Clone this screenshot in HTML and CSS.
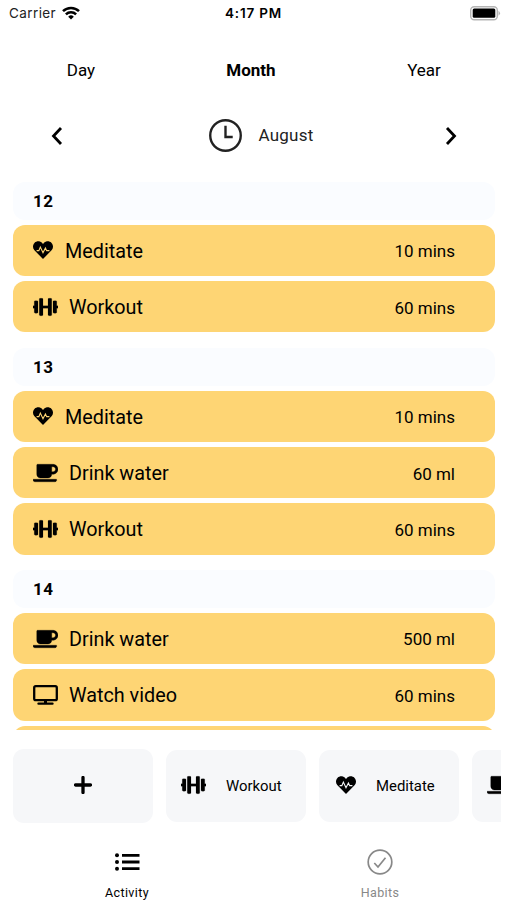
FILE: index.html
```html
<!DOCTYPE html>
<html lang="en">
<head>
<meta charset="utf-8">
<title>Activity</title>
<link rel="stylesheet" href="styles.css">
</head>
<body>
<svg class="defs" aria-hidden="true">
  <symbol id="heart" viewBox="0 0 512 512"><path d="M473.7 73.9l-2.4-2.5c-51.5-52.6-135.8-52.6-187.4 0L256 100l-27.9-28.5c-51.5-52.7-135.9-52.7-187.4 0l-2.4 2.4C-10.4 123.7-12.500 203 31 256l212 218.500c7.100 7.300 18.600 7.300 25.700 0L481 256c43.500-53 41.400-132.300-7.300-182.100z"/><path class="pulse" d="M92 272h58l38-90 68 142 62-118 32 66h70"/></symbol>
  <symbol id="dumbbell" viewBox="0 0 640 512"><path stroke="currentColor" stroke-width="4" d="M104 96H56c-13.300 0-24 10.700-24 24v104H8c-4.400 0-8 3.600-8 8v48c0 4.400 3.600 8 8 8h24v104c0 13.300 10.700 24 24 24h48c13.300 0 24-10.700 24-24V120c0-13.300-10.700-24-24-24zm528 128h-24V120c0-13.300-10.700-24-24-24h-48c-13.300 0-24 10.700-24 24v272c0 13.300 10.700 24 24 24h48c13.300 0 24-10.700 24-24V288h24c4.400 0 8-3.600 8-8v-48c0-4.400-3.600-8-8-8zM456 32h-48c-13.300 0-24 10.700-24 24v168H256V56c0-13.300-10.700-24-24-24h-48c-13.300 0-24 10.700-24 24v400c0 13.300 10.700 24 24 24h48c13.300 0 24-10.700 24-24V288h128v168c0 13.300 10.700 24 24 24h48c13.300 0 24-10.700 24-24V56c0-13.300-10.700-24-24-24z"/></symbol>
  <symbol id="cup" viewBox="0 0 640 512"><path stroke="currentColor" stroke-width="8" d="M192 384h192c53 0 96-43 96-96h32c70.600 0 128-57.400 128-128S582.600 32 512 32H120c-13.300 0-24 10.700-24 24v232c0 53 43 96 96 96zM512 96c35.300 0 64 28.700 64 64s-28.700 64-64 64h-32V96h32zm47.700 384H48.300c-47.600 0-61-64-36-64h583.300c25 0 11.800 64-35.900 64z"/></symbol>
  <symbol id="screen" viewBox="0 0 25 20"><path fill="none" stroke="currentColor" stroke-width="2.300" d="M2.700 1.200h19.600q1.500 0 1.500 1.500v11q0 1.500-1.500 1.500H2.700q-1.500 0-1.500-1.500v-11q0-1.500 1.500-1.500z"/><path d="M11 15h3v2.600h5.500q1.200 0 1.200 1.100t-1.200 1.100h-14q-1.200 0-1.200-1.100t1.200-1.100H11z"/></symbol>
</svg>
<main class="app">
  <header class="status">
    <span class="carrier">Carrier</span>
    <svg class="wifi" viewBox="0 0 18 14"><g fill="none" stroke="currentColor" stroke-width="2.500"><path d="M1 5.200a11.300 11.300 0 0 1 16 0"/><path d="M3.900 8.300a7.200 7.200 0 0 1 10.200 0"/></g><path d="M9 13.500 6.200 10.700a4 4 0 0 1 5.600 0z"/></svg>
    <span class="time">4:17 PM</span>
    <svg class="battery" viewBox="0 0 31 15"><rect x=".7" y=".7" width="26.600" height="13" rx="3.500" fill="#fff" stroke="#b5b5b5" stroke-width="1.400"/><rect x="2.700" y="2.600" width="22.600" height="9.200" rx="1.500"/><path d="M28.500 4.700q3 2.500 0 5z" fill="#b5b5b5"/></svg>
  </header>
  <nav class="range">
    <a class="day">Day</a><a class="month">Month</a><a class="year">Year</a>
  </nav>
  <div class="period">
    <svg class="chev" viewBox="0 0 12 18"><path d="M10 1 2.500 9l7.500 8"/></svg>
    <div class="current">
      <svg class="clock" viewBox="0 0 32 32"><circle cx="16" cy="16" r="14.800"/><path d="M16 6.500V17.500h7"/></svg>
      <span>August</span>
    </div>
    <svg class="chev" viewBox="0 0 12 18"><path d="m2 1 7.500 8L2 17"/></svg>
  </div>
  <div class="list">
    <section>
      <h2>12</h2>
      <div class="card"><svg class="heart"><use href="#heart"/></svg><span>Meditate</span><b>10 mins</b></div>
      <div class="card"><svg><use href="#dumbbell"/></svg><span>Workout</span><b>60 mins</b></div>
    </section>
    <section>
      <h2>13</h2>
      <div class="card"><svg class="heart"><use href="#heart"/></svg><span>Meditate</span><b>10 mins</b></div>
      <div class="card"><svg><use href="#cup"/></svg><span>Drink water</span><b>60 ml</b></div>
      <div class="card"><svg><use href="#dumbbell"/></svg><span>Workout</span><b>60 mins</b></div>
    </section>
    <section>
      <h2>14</h2>
      <div class="card"><svg><use href="#cup"/></svg><span>Drink water</span><b>500 ml</b></div>
      <div class="card"><svg><use href="#screen"/></svg><span>Watch video</span><b>60 mins</b></div>
      <div class="card"></div>
    </section>
  </div>
  <div class="chips">
    <div class="chip add"><svg class="plus" viewBox="0 0 18 18"><path d="M9 1.500v15M1.500 9h15"/></svg></div>
    <div class="chip"><svg><use href="#dumbbell"/></svg><span>Workout</span></div>
    <div class="chip meditate"><svg class="heart"><use href="#heart"/></svg><span>Meditate</span></div>
    <div class="chip"><svg><use href="#cup"/></svg></div>
  </div>
  <footer class="tabs">
    <a class="tab"><svg viewBox="0 0 26 26"><g fill="none" stroke="currentColor" stroke-width="2.800"><path d="M8 6.300h17.500M8 13h17.500M8 19.700h17.500"/></g><circle cx="3" cy="6.300" r="2"/><circle cx="3" cy="13" r="2"/><circle cx="3" cy="19.700" r="2"/></svg><span>Activity</span></a>
    <a class="tab off"><svg viewBox="0 0 26 26"><g fill="none" stroke="currentColor" stroke-width="1.700"><circle cx="13" cy="13" r="11.800"/><path d="m7.300 14 3.700 4 7.500-9.300"/></g></svg><span>Habits</span></a>
  </footer>
</main>
</body>
</html>
```
FILE: styles.css
```css
* { box-sizing: border-box; }
body { margin: 0; background: #fff; color: #000; font-family: Roboto, "Liberation Sans", sans-serif; }
svg { display: block; fill: currentColor; flex: none; }
.defs { width: 0; height: 0; position: absolute; }
.app { width: 507px; height: 900px; overflow: hidden; display: flex; flex-direction: column; }
.status { height: 27px; display: grid; grid-template-columns: 53px 172px 1fr 31px; align-items: center; padding: 0 6px 0 9px; font: 13.500px/27px Inter, sans-serif; }
.carrier { color: #222; letter-spacing: .4px; }
.wifi { width: 18px; height: 14px; margin-bottom: 2px; }
.time { font-weight: 600; font-size: 13.500px; letter-spacing: .8px; white-space: nowrap; margin-left: -9px; }
.battery { width: 31px; height: 15px; margin-bottom: 1px; }
.range { height: 86px; display: grid; grid-template-columns: 162px 178px 168px; text-align: center; font-size: 17px; line-height: 86px; }
.month { font-weight: 700; }
.period { height: 45px; padding: 0 50px 0 51px; display: flex; align-items: center; justify-content: space-between; }
.chev { width: 12px; height: 18px; fill: none; stroke: #000; stroke-width: 2.800px; }
.current { margin-left: 15px; display: flex; align-items: center; gap: 16px; font-size: 17px; letter-spacing: .25px; color: #222; }
.current span { padding-bottom: 1px; }
.clock { width: 33px; height: 33px; fill: none; stroke: #222; stroke-width: 2.300px; }
.list { margin-top: 24px; height: 548px; padding: 0 12.500px 0 13px; overflow: hidden; }
section { margin-bottom: 15.600px; }
h2 { margin: 0; height: 38px; padding-left: 20px; border-radius: 12px; background: #fafcff; font: 700 17px/39px Roboto, sans-serif; letter-spacing: .5px; }
.card { --surface: #fed574; margin-top: 5px; height: 51.200px; padding: 0 39.500px 0 20px; border-radius: 12px; background: var(--surface); display: flex; align-items: center; font-size: 19.800px; }
.card svg, .chip svg { width: 25px; height: 20px; }
.card span { margin-left: 11px; padding-top: 2px; }
.card b { margin-left: auto; padding-top: 1.500px; font-size: 17px; font-weight: 400; }
.card .heart { width: 20px; margin-bottom: 2px; }
.chip .heart { width: 20px; }
.card .heart + span { margin-left: 12px; }
.pulse { fill: none; stroke: var(--surface); stroke-width: 28px; }
.chips { margin-top: 19px; width: 501px; height: 74px; padding-left: 13px; display: flex; align-items: center; gap: 13px; overflow: hidden; }
.chip { --surface: #f6f7f9; flex: 0 0 140px; height: 72px; border-radius: 11px; background: var(--surface); display: flex; align-items: center; padding: 0 0 2px 15px; font-size: 14.900px; }
.chip span { margin-left: 20px; padding-top: 1px; }
.meditate { padding-left: 17px; }
.add { height: 74px; justify-content: center; padding: 0 0 2px; }
.chip .plus { width: 18px; height: 18px; stroke: #000; stroke-width: 3.300px; stroke-linecap: round; }
.tabs { height: 77px; display: grid; grid-template-columns: 254px 252px; }
.tab { display: flex; flex-direction: column; align-items: center; padding-top: 26px; font-size: 12.500px; line-height: 17px; letter-spacing: .4px; }
.tab svg { width: 26px; height: 26px; margin-bottom: 9px; }
.off { color: #888; }
```
